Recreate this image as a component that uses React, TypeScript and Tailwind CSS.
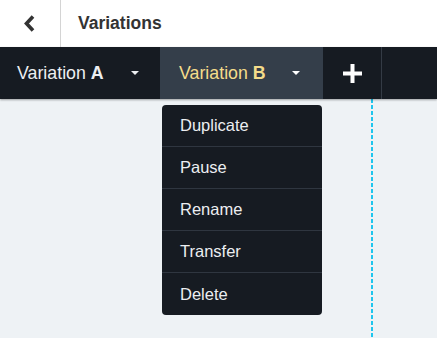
import React from 'react';

const menuItems = ['Duplicate', 'Pause', 'Rename', 'Transfer', 'Delete'];

function Caret() {
  return (
    <svg width="8" height="4" viewBox="0 0 8 4" className="block">
      <path d="M0 0h8L4 4z" fill="currentColor" />
    </svg>
  );
}

export default function App() {
  return (
    <div
      className="w-[437px] h-[338px] flex flex-col bg-[#eef2f5] overflow-hidden"
      style={{ fontFamily: '"Liberation Sans", Arial, sans-serif' }}
    >
      {/* Header */}
      <div className="h-[47px] flex items-stretch bg-white shrink-0">
        <div className="w-[61px] flex items-center justify-center border-r border-[#d4d4d4]">
          <svg width="13" height="17" viewBox="0 0 13 17" className="mr-[2px]">
            <path d="M10 1.5 L3.5 8.5 L10 15.5" fill="none" stroke="#333" strokeWidth="3.6" />
          </svg>
        </div>
        <div className="flex items-center pl-[17px] text-[17.5px] font-bold text-[#333]">Variations</div>
      </div>

      {/* Tabs bar */}
      <div className="h-[52px] flex bg-[#161b22] shrink-0 shadow-[0_1px_2px_rgba(0,0,0,0.35)] relative z-10">
        <div className="w-[160px] flex items-center justify-between pl-[17px] pr-[21px] text-[#eceef1] text-[17.8px]">
          <span>
            Variation <span className="font-bold">A</span>
          </span>
          <Caret />
        </div>
        <div className="w-[163px] flex items-center justify-between pl-[19px] pr-[23px] bg-[#343e4a] text-[#f4dc8a] text-[17.8px]">
          <span>
            Variation <span className="font-bold">B</span>
          </span>
          <span className="text-white">
            <Caret />
          </span>
        </div>
        <div className="w-[59px] flex items-center justify-center border-r border-[#343b45]">
          <svg width="21" height="21" viewBox="0 0 21 21">
            <path d="M10.5 1v19M1 10.5h19" stroke="#fff" strokeWidth="4" />
          </svg>
        </div>
      </div>

      {/* Content */}
      <div className="flex-1 relative flex">
        <div className="w-[371px]" />
        <div className="w-[1.5px] bg-[repeating-linear-gradient(to_bottom,#1fc6ee_0_4px,transparent_4px_6px)]" />

        <div className="absolute left-[162px] top-[6px] w-[160px] bg-[#161b22] rounded-[4px] overflow-hidden">
          {menuItems.map((item, i) => (
            <div
              key={item}
              className={
                'h-[42px] flex items-center pl-[18px] text-[16.5px] text-[#eceef1]' +
                (i < menuItems.length - 1 ? ' border-b border-[#2f3640]' : '')
              }
            >
              {item}
            </div>
          ))}
        </div>
      </div>
    </div>
  );
}
